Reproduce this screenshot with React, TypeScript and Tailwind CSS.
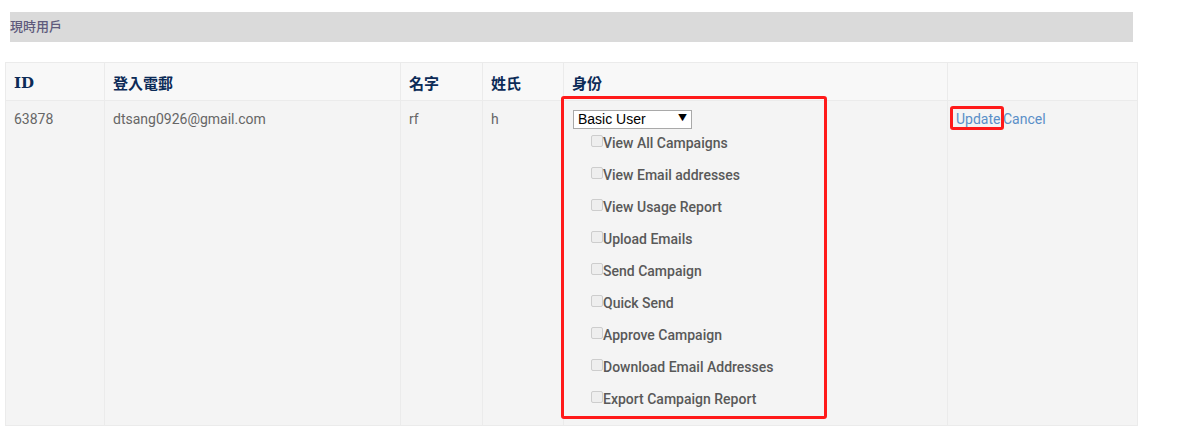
import React from 'react';

const permissions = [
  'View All Campaigns',
  'View Email addresses',
  'View Usage Report',
  'Upload Emails',
  'Send Campaign',
  'Quick Send',
  'Approve Campaign',
  'Download Email Addresses',
  'Export Campaign Report',
];

const th =
  'h-[38px] border border-[#ebebeb] px-2 pt-1 text-left align-middle text-[15px] font-bold text-[#0c2b57]';
const td = 'border border-[#ebebeb] px-2 pt-2 pb-2 align-top text-[14px] text-[#666]';

export default function App() {
  return (
    <div className="min-h-[433px] bg-white pt-3 font-['Roboto','Noto_Sans_CJK_TC',sans-serif]">
      <div className="ml-[10px] flex h-[30px] w-[1123px] items-center bg-[#dadada] text-[13px] font-medium text-[#5e5a7c]">
        現時用戶
      </div>

      <table className="ml-[5px] mt-5 w-[1132px] table-fixed border-collapse">
        <colgroup>
          <col className="w-[99px]" />
          <col className="w-[296px]" />
          <col className="w-[82px]" />
          <col className="w-[81px]" />
          <col className="w-[384px]" />
          <col className="w-[190px]" />
        </colgroup>
        <thead>
          <tr className="bg-[#f8f8f8]">
            <th className={`${th} font-['DejaVu_Serif',serif]`}>ID</th>
            <th className={`${th} font-['Noto_Sans_CJK_TC',sans-serif]`}>登入電郵</th>
            <th className={`${th} font-['Noto_Sans_CJK_TC',sans-serif]`}>名字</th>
            <th className={`${th} font-['Noto_Sans_CJK_TC',sans-serif]`}>姓氏</th>
            <th className={`${th} font-['Noto_Sans_CJK_TC',sans-serif]`}>身份</th>
            <th className={th}></th>
          </tr>
        </thead>
        <tbody>
          <tr className="bg-[#f4f4f4]">
            <td className={`${td} leading-5`}>63878</td>
            <td className={`${td} leading-5`}>dtsang0926@gmail.com</td>
            <td className={`${td} leading-5`}>rf</td>
            <td className={`${td} leading-5`}>h</td>
            <td className="relative border border-[#ebebeb] pb-[10px] pl-[9px] pr-2 pt-2 align-top text-[14px] text-[#666]">
              <div className="relative h-[19px] w-[119px]">
                <select
                  defaultValue="basic"
                  className="h-[19px] w-[119px] appearance-none rounded-none border border-[#a9a9a9] bg-white pl-1 font-['Liberation_Sans',sans-serif] text-[14px] leading-[17px] text-black"
                >
                  <option value="basic">Basic User</option>
                </select>
                <span className="pointer-events-none absolute right-[5px] top-[3px] text-[9px] leading-3 text-black">▼</span>
              </div>
              <div className="-mt-px">
                {permissions.map((p) => (
                  <label key={p} className="flex h-8 items-center pl-[18px]">
                    <input
                      type="checkbox"
                      disabled
                      className="mb-[4px] h-[12px] w-[12px] appearance-none rounded-[2px] border border-[#cdcdcd] bg-[#eeeeee]"
                    />
                    <span className="text-[14px] font-medium text-[#595959]">{p}</span>
                  </label>
                ))}
              </div>
              <div className="pointer-events-none absolute left-[-3px] top-[-5px] h-[323px] w-[266px] rounded-[3px] border-[3px] border-[#ff1a1a]" />
            </td>
            <td className={`${td} relative leading-5`}>
              <span className="text-[#5a8fc8]">Update</span>{' '}
              <span className="-ml-px text-[#5a8fc8]">Cancel</span>
              <div className="pointer-events-none absolute left-[2px] top-[5px] h-[24px] w-[54px] rounded-[3px] border-[3px] border-[#ff1a1a]" />
            </td>
          </tr>
        </tbody>
      </table>
    </div>
  );
}
